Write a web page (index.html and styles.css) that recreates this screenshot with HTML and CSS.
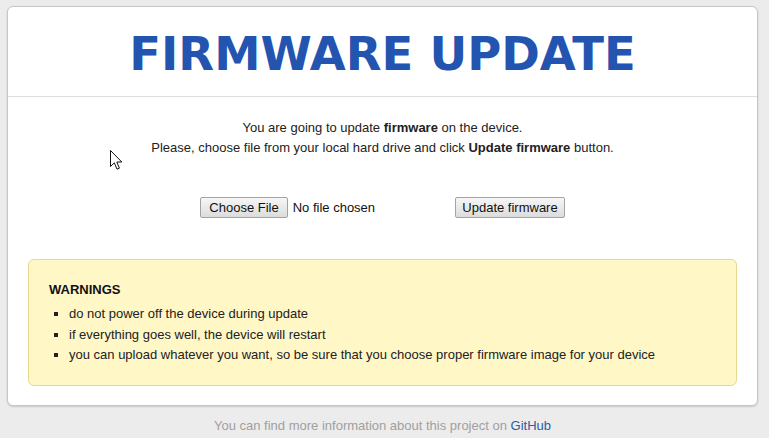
FILE: index.html
```html
<!DOCTYPE html>
<html lang="en">
<head>
    <meta charset="UTF-8">
    <meta name="viewport" content="width=device-width, initial-scale=1.0">
    <title>Firmware Update</title>
    <link rel="stylesheet" href="styles.css">
</head>
<body>
    <div class="card">
        <header class="card-header">
            <h1>FIRMWARE UPDATE</h1>
        </header>
        <div class="card-body">
            <p class="intro">
                You are going to update <b>firmware</b> on the device.<br>
                Please, choose file from your local hard drive and click <b>Update firmware</b> button.
            </p>
            <form class="upload" method="POST" action="/update" enctype="multipart/form-data">
                <input type="file" name="update" class="file">
                <button type="submit" class="btn">Update firmware</button>
            </form>
            <div class="warnings">
                <h3>WARNINGS</h3>
                <ul>
                    <li>do not power off the device during update</li>
                    <li>if everything goes well, the device will restart</li>
                    <li>you can upload whatever you want, so be sure that you choose proper firmware image for your device</li>
                </ul>
            </div>
        </div>
    </div>
    <p class="footer">You can find more information about this project on <a href="#">GitHub</a></p>

    <!-- mouse pointer from the screenshot -->
    <svg class="cursor" width="13" height="21" viewBox="0 0 13 21">
        <path d="M0.5 0.5 L0.5 16.5 L4.3 12.8 L7 19.2 L9.4 18.2 L6.8 12 L11.8 12 Z" fill="#fff" stroke="#111" stroke-width="1" stroke-linejoin="miter"/>
    </svg>
</body>
</html>
```

FILE: styles.css
```css
body {
    margin: 0;
    padding: 6px 11px 0 7px;
    background-color: #ececec;
    font-family: "Liberation Sans", Arial, sans-serif;
    font-size: 13px;
    color: #222;
}
.card {
    background-color: #fff;
    border: 1px solid #c6c6c6;
    border-radius: 6px;
    box-shadow: 0 1px 2px rgba(0, 0, 0, 0.15);
}
.card-header {
    height: 90px;
    padding-top: 4px;
    box-sizing: border-box;
    display: flex;
    align-items: center;
    justify-content: center;
    border-bottom: 1px solid #dedede;
}
.card-header h1 {
    margin: 0;
    font-family: "DejaVu Sans", Verdana, sans-serif;
    font-weight: bold;
    font-size: 46.5px;
    color: #2254b0;
}
.card-body {
    padding: 21px 20px 19px 20px;
}
.intro {
    margin: 0;
    text-align: center;
    line-height: 20px;
}
.upload {
    margin-top: 39px;
    display: flex;
    justify-content: center;
    align-items: center;
}
.file {
    width: 255px;
    font-family: "Liberation Sans", Arial, sans-serif;
    font-size: 13px;
    color: #111;
}
.file::file-selector-button,
.btn {
    height: 21px;
    font-family: "Liberation Sans", Arial, sans-serif;
    font-size: 13px;
    color: #111;
    border: 1px solid #a3a3a3;
    border-radius: 2px;
    background: linear-gradient(#f6f6f6, #dcdcdc);
    cursor: pointer;
}
.file::file-selector-button {
    padding: 0 8px;
    margin-right: 5px;
}
.btn {
    padding: 0 6px;
}
.warnings {
    margin-top: 41px;
    padding: 20px 20px 19px 20px;
    background-color: #fff7c6;
    border: 1px solid #e6d98f;
    border-radius: 6px;
    line-height: 20px;
}
.warnings h3 {
    margin: 0 0 4px 0;
    font-size: 13px;
    font-weight: bold;
    color: #111;
}
.warnings ul {
    margin: 0;
    padding-left: 20px;
    list-style: square;
}
.warnings li {
    line-height: 20.5px;
}
.footer {
    margin: 10px 0 0 0;
    text-align: center;
    line-height: 20px;
    color: #a0a0a0;
}
.footer a {
    color: #2c5aa6;
    text-decoration: none;
}
.cursor {
    position: absolute;
    left: 110px;
    top: 150px;
}
```
